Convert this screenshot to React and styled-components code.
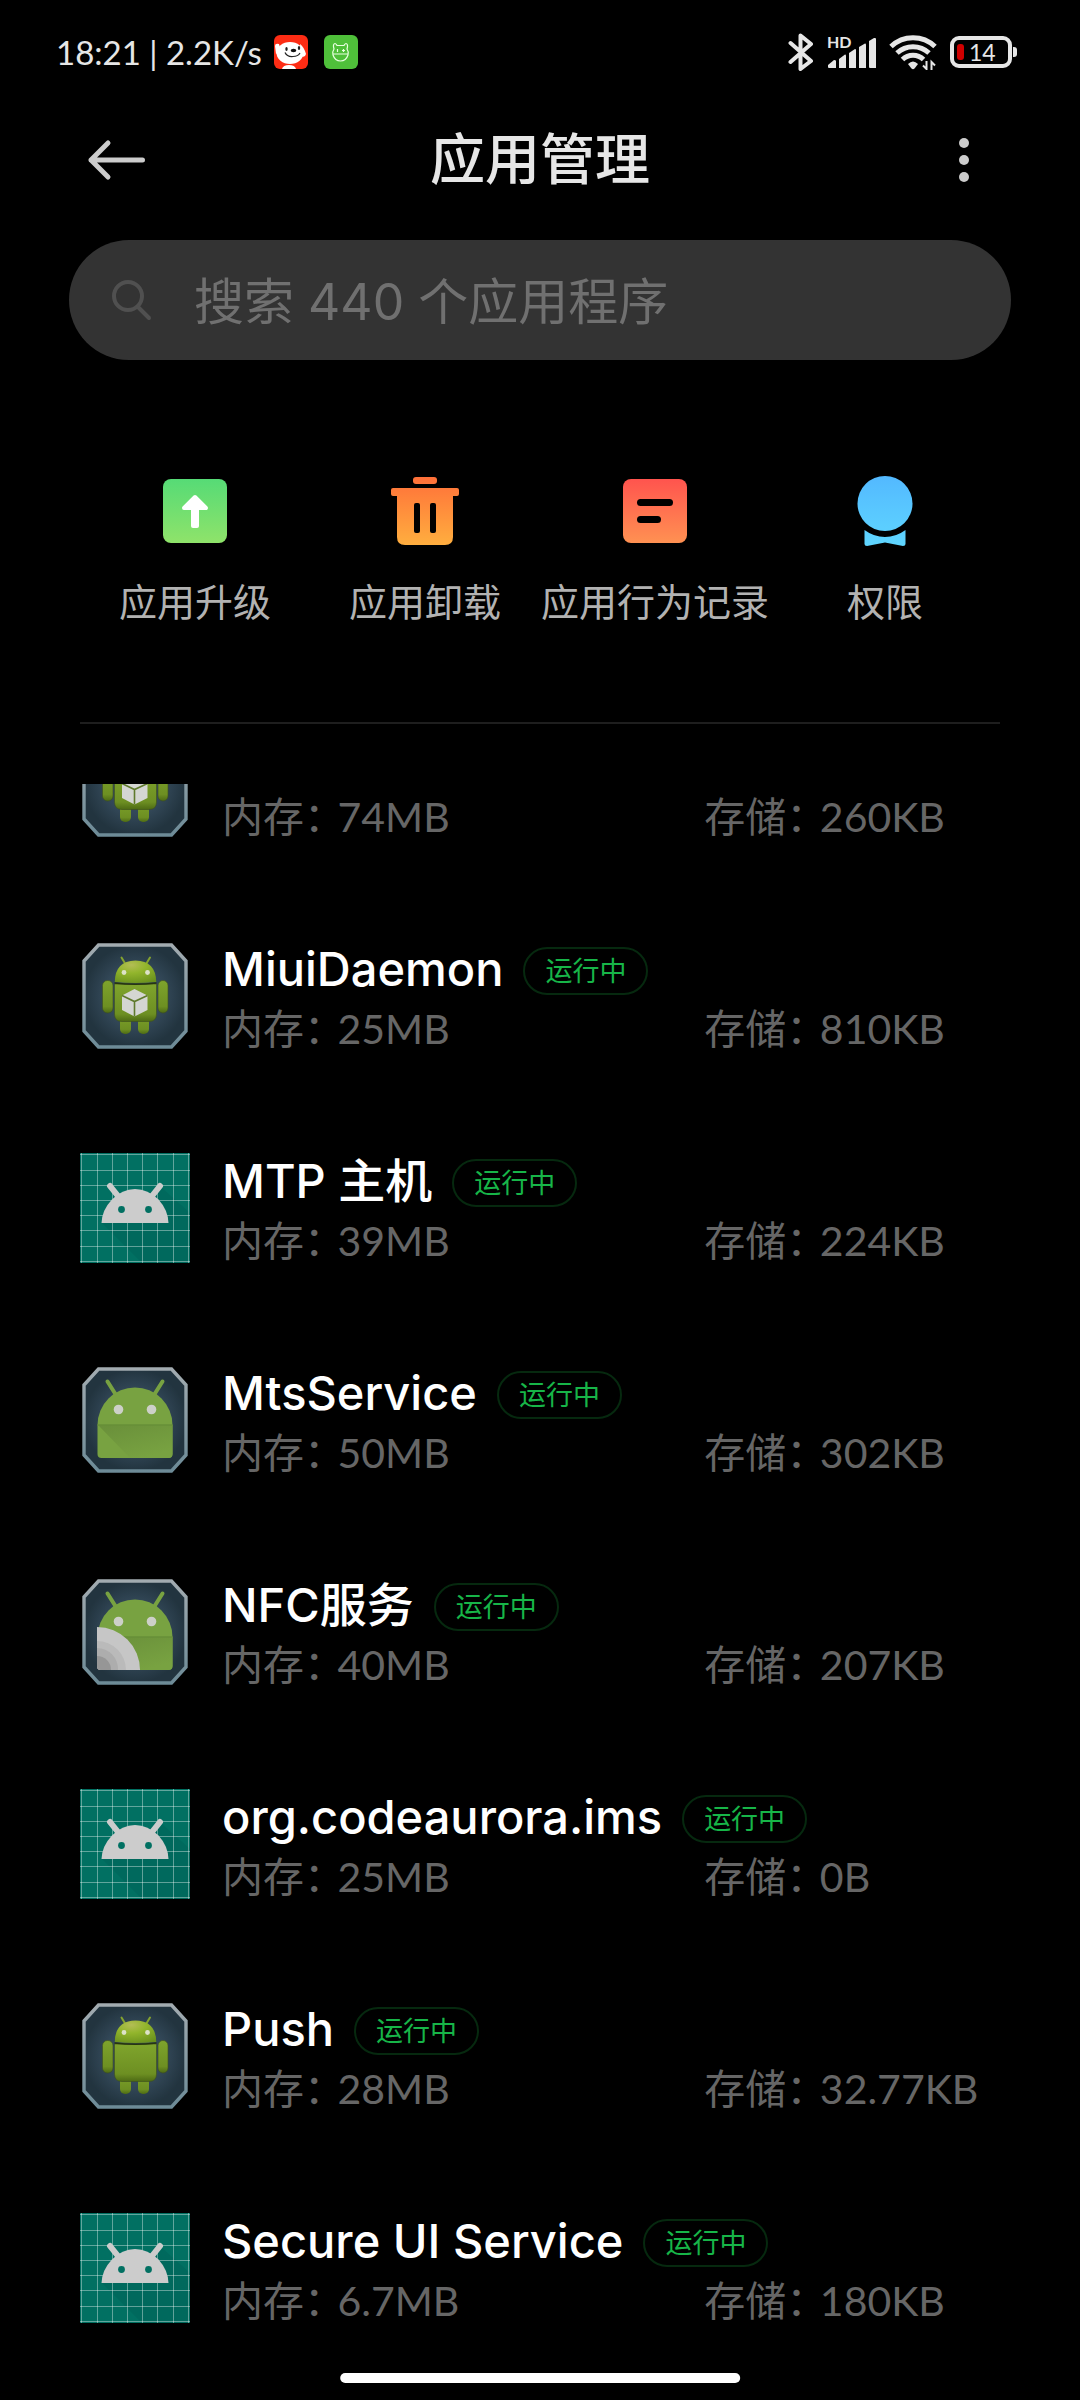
import { useState } from "react";
import styled, { createGlobalStyle } from "styled-components";

const actions = [
  { id: "upgrade", label: "应用升级" },
  { id: "uninstall", label: "应用卸载" },
  { id: "behavior", label: "应用行为记录" },
  { id: "permission", label: "权限" },
];

const apps = [
  { id: 1, icon: "robotBox", name: "", memory: "74MB", storage: "260KB" },
  { id: 2, icon: "robotBox", name: "MiuiDaemon", memory: "25MB", storage: "810KB" },
  { id: 3, icon: "grid", name: "MTP 主机", memory: "39MB", storage: "224KB" },
  { id: 4, icon: "head", name: "MtsService", memory: "50MB", storage: "302KB" },
  { id: 5, icon: "nfc", name: "NFC服务", memory: "40MB", storage: "207KB" },
  { id: 6, icon: "grid", name: "org.codeaurora.ims", memory: "25MB", storage: "0B" },
  { id: 7, icon: "robot", name: "Push", memory: "28MB", storage: "32.77KB" },
  { id: 8, icon: "grid", name: "Secure UI Service", memory: "6.7MB", storage: "180KB" },
];

const App = () => {
  const [keyword, setKeyword] = useState("");

  return (
    <>
      <GlobalStyle />
      <IconDefs />
      <Screen>
        <StatusBar />
        <Header>
          <IconButton type="button" aria-label="返回">
            <BackIcon />
          </IconButton>
          <Title>应用管理</Title>
          <IconButton type="button" aria-label="更多" $end>
            <MoreIcon />
          </IconButton>
        </Header>
        <SearchBox>
          <SearchIcon />
          <SearchInput
            type="text"
            aria-label="搜索应用程序"
            placeholder="搜索 440 个应用程序"
            value={keyword}
            onChange={(e) => setKeyword(e.target.value)}
          />
        </SearchBox>
        <Actions>
          {actions.map((action) => (
            <ActionButton key={action.id} type="button">
              <ActionIcon id={action.id} />
              {action.label}
            </ActionButton>
          ))}
        </Actions>
        <ListViewport>
          <AppList>
            {apps.map((app) => (
              <AppItem key={app.id} app={app} />
            ))}
          </AppList>
        </ListViewport>
        <HomeIndicator />
      </Screen>
    </>
  );
};

export default App;

const AppItem = ({ app }) => (
  <AppRow>
    <AppIcon type={app.icon} />
    <AppInfo>
      <NameLine>
        <AppName>{app.name}</AppName>
        {app.name && <Badge>运行中</Badge>}
      </NameLine>
      <Usage>
        <UsageItem>
          <UsageLabel>内存：</UsageLabel>
          {app.memory}
        </UsageItem>
        <UsageItem>
          <UsageLabel>存储：</UsageLabel>
          {app.storage}
        </UsageItem>
      </Usage>
    </AppInfo>
  </AppRow>
);

const StatusBar = () => (
  <StatusRow>
    <StatusGroup $gap={16}>
      <StatusGroup $gap={12}>
        <StatusText>18:21 | 2.2K/s</StatusText>
        <DogIcon />
      </StatusGroup>
      <HippoIcon />
    </StatusGroup>
    <StatusGroup $gap={12}>
      <BluetoothIcon />
      <SignalIcon />
      <WifiIcon />
      <BatteryWrapper>
        <Battery>
          <BatteryLevel />
          14
        </Battery>
        <BatteryNub />
      </BatteryWrapper>
    </StatusGroup>
  </StatusRow>
);

const DogIcon = () => (
  <svg width="34" height="34" viewBox="0 0 34 34">
    <rect width="34" height="34" rx="6" fill="#fd2c14" />
    <path d="M8 34 Q9 30 15 30 Q21 30 22 34 Z" fill="#fff" />
    <path d="M1 11 Q1 8 5 9 L7 16 L2 19 Z" fill="#fff" />
    <path d="M26 9 Q30 12 32 19 Q31 23 27 21 Z" fill="#fff" />
    <ellipse cx="16" cy="18" rx="13.5" ry="11" fill="#fff" />
    <ellipse cx="12.5" cy="14" rx="1.2" ry="2" fill="#222" />
    <ellipse cx="25" cy="13" rx="1.2" ry="2" fill="#222" />
    <ellipse cx="19.5" cy="15.5" rx="2.8" ry="1.8" fill="#111" />
    <path d="M11 17.5 Q13 22 19 21.5 Q24 21.5 26 18" fill="none" stroke="#222" strokeWidth="1.2" />
  </svg>
);

const HippoIcon = () => (
  <svg width="34" height="34" viewBox="0 0 34 34">
    <rect width="34" height="34" rx="6" fill="#4fc03a" />
    <path
      d="M10 14 Q8.5 9 11 8.5 Q12.5 9 13 10.5 H20 Q20.5 9 22 8.5 Q24.5 9 23 14 Q25 17 24 20 Q22 26 16.5 26 Q11 26 9 20 Q8 17 10 14 Z M9 19 H24"
      fill="none"
      stroke="#e9ffe0"
      strokeWidth="1.2"
    />
    <path d="M13.5 14 V17 M19.5 14 V17 M18 15.5 H21" stroke="#e9ffe0" strokeWidth="1.2" />
  </svg>
);

const BluetoothIcon = () => (
  <svg width="26" height="40" viewBox="0 0 26 40" fill="none" stroke="#e6e6e6" strokeWidth="4" strokeLinejoin="round" strokeLinecap="round">
    <path d="M2.5 11 L23 29 L12.5 37 V3.5 L23 12 L2.5 30" />
  </svg>
);

const SignalIcon = () => (
  <svg width="50" height="52" viewBox="0 -8 50 52" fill="#e6e6e6">
    <text x="1" y="14" fontSize="16" fontWeight="700">
      HD
    </text>
    <path d="M2 31 L8 26 Q10 26 10 27 V34 H3 Q2 34 2 33 Z" />
    <path d="M13 25 L19 20.5 Q20 20.5 20 21.5 V34 H13 Z" />
    <path d="M23 19 L29 15 Q30 15 30 16 V34 H23 Z" />
    <path d="M33 13 L39 9.5 Q40 9.5 40 10.5 V34 H33 Z" />
    <path d="M43 7 L48 4 Q50 3.5 50 5 V34 H44 Q43 34 43 33 Z" />
  </svg>
);

const WifiIcon = () => (
  <svg width="50" height="36" viewBox="0 0 50 36" fill="none" stroke="#e6e6e6" strokeWidth="5">
    <path d="M3 12.5 A32 32 0 0 1 47 12.5" />
    <path d="M9 19 A23.5 23.5 0 0 1 41 19" />
    <path d="M14.5 25.5 A15 15 0 0 1 35.5 25.5" />
    <path d="M20 30 Q25 25 30 30 L26.5 34.5 Q25 36 23.5 34.5 Z" fill="#e6e6e6" stroke="none" />
    <path d="M38.5 26.5 V36 M43.5 36 V26.5" stroke="#000" strokeWidth="6" />
    <path d="M38.5 27 V35 L35 31.5 M43.5 36 V28 L47 31.5" strokeWidth="2" />
  </svg>
);

const BackIcon = () => (
  <svg width="72" height="48" viewBox="0 0 72 48" fill="none" stroke="#ccc" strokeWidth="5" strokeLinecap="round" strokeLinejoin="round">
    <path d="M62.5 24 H11 M28 7 L11 24 L28 41" />
  </svg>
);

const MoreIcon = () => (
  <svg width="72" height="48" viewBox="0 0 72 48" fill="#ccc">
    <circle cx="36" cy="7" r="5" />
    <circle cx="36" cy="24" r="5" />
    <circle cx="36" cy="41" r="5" />
  </svg>
);

const SearchIcon = () => (
  <svg width="42" height="42" viewBox="0 0 42 42" fill="none" stroke="#505050" strokeWidth="4" strokeLinecap="round">
    <circle cx="17" cy="17" r="14" />
    <path d="M27 28 L38 39" />
  </svg>
);

// gradients shared by the icons below
const IconDefs = () => (
  <HiddenSvg aria-hidden="true">
    <defs>
      <linearGradient id="green" x1="0" y1="0" x2="0" y2="1">
        <stop offset="0" stopColor="#56db76" />
        <stop offset="1" stopColor="#8fe36a" />
      </linearGradient>
      <linearGradient id="orange" gradientUnits="userSpaceOnUse" x1="0" y1="0" x2="0" y2="70">
        <stop offset="0" stopColor="#ff6f39" />
        <stop offset="1" stopColor="#ffaf3f" />
      </linearGradient>
      <linearGradient id="red" x1="0" y1="0" x2="0" y2="1">
        <stop offset="0" stopColor="#ff544e" />
        <stop offset="1" stopColor="#ff9152" />
      </linearGradient>
      <linearGradient id="blue" gradientUnits="userSpaceOnUse" x1="0" y1="0" x2="0" y2="70">
        <stop offset="0" stopColor="#53b9ff" />
        <stop offset="1" stopColor="#5fd6ff" />
      </linearGradient>
      <radialGradient id="frame">
        <stop offset="0" stopColor="#40576a" />
        <stop offset="0.6" stopColor="#324757" />
        <stop offset="1" stopColor="#22343f" />
      </radialGradient>
      <linearGradient id="frameEdge" x1="0" y1="0" x2="0" y2="1">
        <stop offset="0" stopColor="#a2abb0" />
        <stop offset="1" stopColor="#6d8b97" />
      </linearGradient>
      <linearGradient id="headShadow" x1="0" y1="0" x2="0.6" y2="1">
        <stop offset="0" stopColor="#698f3a" />
        <stop offset="1" stopColor="#78a241" />
      </linearGradient>
      <radialGradient id="robotHead" cx="0.4" cy="0.2" r="0.9">
        <stop offset="0" stopColor="#b3bd55" />
        <stop offset="0.4" stopColor="#92b52c" />
        <stop offset="1" stopColor="#688f1c" />
      </radialGradient>
      <linearGradient id="robotBody" x1="0" y1="0" x2="0" y2="1">
        <stop offset="0" stopColor="#7fa42c" />
        <stop offset="0.8" stopColor="#6d8f22" />
        <stop offset="1" stopColor="#4d6a14" />
      </linearGradient>
    </defs>
  </HiddenSvg>
);

const ActionIcon = ({ id }) => (
  <svg width="70" height="70" viewBox="0 0 70 70">
    {id === "upgrade" && (
      <>
        <rect x="3" y="3" width="64" height="64" rx="8" fill="url(#green)" />
        <path d="M35 21 L46 32 H24 Z" fill="#fff" stroke="#fff" strokeWidth="4" strokeLinejoin="round" />
        <rect x="31" y="28" width="8" height="24" rx="2" fill="#fff" />
      </>
    )}
    {id === "uninstall" && (
      <>
        <rect x="23" y="1" width="24" height="7" rx="3" fill="url(#orange)" />
        <path
          d="M3 12 H67 Q69 12 69 14 V18 Q69 20 67 20 H63 V61 Q63 69 55 69 H15 Q7 69 7 61 V20 H3 Q1 20 1 18 V14 Q1 12 3 12 Z"
          fill="url(#orange)"
        />
        <rect x="24" y="27" width="6" height="30" rx="2" />
        <rect x="40" y="27" width="6" height="30" rx="2" />
      </>
    )}
    {id === "behavior" && (
      <>
        <rect x="3" y="3" width="64" height="64" rx="8" fill="url(#red)" />
        <rect x="17" y="23" width="36" height="7" rx="3.5" />
        <rect x="17" y="40" width="24" height="7" rx="3.5" />
      </>
    )}
    {id === "permission" && (
      <>
        <circle cx="35" cy="27.5" r="27.5" fill="url(#blue)" />
        <path d="M14.5 54 Q24 61 35 61 Q46 61 55.5 54 V68 Q55.5 70 53 70 L35 66.5 L17 70 Q14.5 70 14.5 68 Z" fill="url(#blue)" />
      </>
    )}
  </svg>
);

const AppIcon = ({ type }) => (
  <svg width="110" height="110" viewBox="0 0 110 110">
    {type === "grid" ? (
      <GridRobot />
    ) : (
      <path
        d="M18.5 4 H91.5 L106 20 V90 L91.5 106 H18.5 L4 90 V20 Z"
        fill="url(#frame)"
        stroke="url(#frameEdge)"
        strokeWidth="3.4"
      />
    )}
    {type === "robot" && <Robot />}
    {type === "robotBox" && (
      <>
        <Robot />
        <path d="M54.5 48 L67.5 54.5 V69 L54.5 75.5 L42 69 V54.5 Z" fill="#d4d6d2" />
        <path d="M42 54.5 L54.5 60.5 L67.5 54.5 M54.5 60.5 V75.5" fill="none" stroke="#5f7a2c" strokeWidth="1.6" />
      </>
    )}
    {type === "head" && <Head />}
    {type === "nfc" && (
      <>
        <Head />
        <path d="M17 50 A43 43 0 0 1 60 93 H21 Q17 93 17 89 Z" fill="#c6c6c6" />
        <path d="M17 64 A29 29 0 0 1 46 93 H21 Q17 93 17 89 Z" fill="#bababa" />
        <path d="M17 71 A21 21 0 0 1 38 93 H21 Q17 93 17 89 Z" fill="#adadad" />
        <path d="M17 79 A14 14 0 0 1 31 93 H21 Q17 93 17 89 Z" fill="#969696" />
      </>
    )}
  </svg>
);

const Head = () => (
  <>
    <path d="M27.5 16.5 L36 30 M82.5 16.5 L74 30" stroke="#78a241" strokeWidth="4" strokeLinecap="round" />
    <path d="M17.5 60 A37.5 37.5 0 0 1 92.5 60 V89 Q92.5 93 88.5 93 H21.5 Q17.5 93 17.5 89 Z" fill="#78a241" />
    <path d="M18 60 L50 93 H88 Q92.5 93 92.5 89 V60 Z" fill="url(#headShadow)" />
    <path d="M17.5 60 H92.5" stroke="#678f38" strokeWidth="1.5" />
    <circle cx="38.5" cy="44.5" r="4.8" fill="#cdd0c8" />
    <circle cx="71.5" cy="44.5" r="4.8" fill="#cdd0c8" />
  </>
);

const Robot = () => (
  <>
    <path d="M41.5 16.5 L46 24 M70 16.5 L65.5 24" stroke="#84a32f" strokeWidth="2" strokeLinecap="round" />
    <rect x="22.5" y="39.5" width="10.5" height="32.5" rx="5" fill="url(#robotBody)" stroke="#3d4f1d" strokeWidth="0.6" />
    <rect x="78" y="39.5" width="10" height="32.5" rx="5" fill="url(#robotBody)" stroke="#3d4f1d" strokeWidth="0.6" />
    <rect x="40" y="70" width="11" height="23" rx="5" fill="url(#robotBody)" />
    <rect x="58" y="70" width="11" height="23" rx="5" fill="url(#robotBody)" />
    <path d="M34.5 43 H76.5 V73 Q76.5 80.5 69 80.5 H42 Q34.5 80.5 34.5 73 Z" fill="url(#robotBody)" stroke="#3d4f1d" strokeWidth="0.6" />
    <path d="M34.8 41 Q35 20 55.5 19.5 Q76 20 76.2 41 Q55 43 34.8 41 Z" fill="url(#robotHead)" />
    <path d="M34.5 42 Q55 44.5 76.5 42" fill="none" stroke="#263411" strokeWidth="1.6" />
    <circle cx="44" cy="31.5" r="2.4" fill="#dde2c8" />
    <circle cx="67.5" cy="31.5" r="2.4" fill="#dde2c8" />
  </>
);

const gridLines = [1, 17, 32, 47, 62, 77, 93, 108];

const GridRobot = () => (
  <>
    <rect width="110" height="110" fill="#017062" />
    <path d="M22 70 L62 110 H110 V60 L82 35 Z" fill="#00695d" />
    {gridLines.map((pos) => (
      <path key={pos} d={`M${pos + 0.5} 0 V110 M0 ${pos + 0.5} H110`} stroke="#fff" strokeOpacity="0.38" />
    ))}
    <path d="M30 33 L38 43 M80 33 L72 43" stroke="#ccc" strokeWidth="6" strokeLinecap="round" />
    <path d="M21.5 70 Q22 57 32 46.5 Q42 36 55 36 Q68 36 78.5 46.5 Q88 57 88.5 70 Z" fill="#ccc" />
    <circle cx="41.5" cy="56.5" r="3.4" fill="#017062" />
    <circle cx="68.5" cy="56.5" r="3.4" fill="#017062" />
  </>
);

const GlobalStyle = createGlobalStyle`
  * {
    box-sizing: border-box;
  }

  body {
    margin: 0;
    background: #000;
    font-family: Lato, "Noto Sans CJK SC", sans-serif;
  }

  svg {
    display: block;
    flex-shrink: 0;
  }

  button {
    padding: 0;
    border: none;
    background: none;
    font-family: inherit;
    cursor: pointer;
  }
`;

const HiddenSvg = styled.svg`
  position: absolute;
  width: 0;
  height: 0;
`;

const Screen = styled.main`
  display: flex;
  flex-direction: column;
  min-height: 100vh;
  color: #e6e6e6;
`;

const StatusRow = styled.div`
  display: flex;
  align-items: center;
  justify-content: space-between;
  height: 104px;
  padding: 0 63px 0 56px;
`;

const StatusGroup = styled.div`
  display: flex;
  align-items: center;
  gap: ${({ $gap }) => $gap}px;
`;

const StatusText = styled.span`
  font-size: 33px;
  line-height: 40px;
  white-space: nowrap;
`;

const BatteryWrapper = styled.div`
  display: flex;
  align-items: center;
  gap: 1px;
`;

const Battery = styled.div`
  display: flex;
  align-items: center;
  gap: 5px;
  width: 62px;
  height: 32px;
  padding-left: 3px;
  border: 4px solid #e6e6e6;
  border-radius: 9px;
  font-size: 23px;
  line-height: 24px;
`;

const BatteryLevel = styled.span`
  width: 7px;
  height: 16px;
  border-radius: 3px;
  background: #d00000;
`;

const BatteryNub = styled.span`
  width: 4px;
  height: 10px;
  border-radius: 0 3px 3px 0;
  background: #e6e6e6;
`;

const Header = styled.header`
  display: grid;
  grid-template-columns: 1fr auto 1fr;
  align-items: center;
  height: 112px;
  padding: 0 80px;
`;

const IconButton = styled.button`
  justify-self: ${({ $end }) => ($end ? "end" : "start")};
`;

const Title = styled.h1`
  margin: 0;
  padding-bottom: 4px;
  font-size: 55px;
  font-weight: 500;
  line-height: 72px;
`;

const SearchBox = styled.div`
  display: flex;
  align-items: center;
  gap: 41px;
  height: 120px;
  margin: 24px 69px 0;
  padding: 0 42px;
  border-radius: 60px;
  background: #333;
`;

const SearchInput = styled.input`
  flex: 1;
  min-width: 0;
  padding: 4px 0 0;
  border: none;
  outline: none;
  background: none;
  color: #e6e6e6;
  font-family: Inter, "Noto Sans CJK SC", sans-serif;
  font-size: 50px;
  line-height: 72px;

  &::placeholder {
    color: #707070;
    opacity: 1;
  }
`;

const Actions = styled.div`
  display: grid;
  grid-template-columns: repeat(4, 1fr);
  margin: 0 80px;
  padding: 116px 0 98px;
  border-bottom: 2px solid #1e1e1e;
`;

const ActionButton = styled.button`
  display: flex;
  flex-direction: column;
  align-items: center;
  gap: 32px;
  color: #b2b2b2;
  font-size: 38px;
  line-height: 46px;
  white-space: nowrap;
`;

const ListViewport = styled.div`
  flex: 1;
  margin-top: 60px;
  overflow: hidden;
`;

// the list is scrolled by half a row
const AppList = styled.ul`
  margin: -106px 0 0;
  padding: 0 80px;
  list-style: none;
`;

const AppRow = styled.li`
  display: flex;
  align-items: center;
  gap: 32px;
  height: 212px;
`;

const AppInfo = styled.div`
  flex: 1;
  min-width: 0;
  padding-top: 5px;
`;

const NameLine = styled.div`
  display: flex;
  align-items: center;
  gap: 20px;
  height: 60px;
`;

const AppName = styled.h2`
  margin: 0;
  color: #fff;
  font-family: Inter, "Noto Sans CJK SC", sans-serif;
  font-size: 47px;
  font-weight: 500;
  line-height: 60px;
  white-space: nowrap;
`;

const Badge = styled.span`
  margin-top: 4px;
  padding: 0 20px;
  border: 2px solid #06290f;
  border-radius: 24px;
  color: #17b548;
  font-size: 27px;
  line-height: 44px;
  white-space: nowrap;
`;

const Usage = styled.div`
  display: grid;
  grid-template-columns: 62% 38%;
  color: #666;
  font-size: 41px;
  line-height: 60px;
`;

const UsageItem = styled.span`
  display: flex;
  gap: 13px;
  white-space: nowrap;
`;

const UsageLabel = styled.span`
  font-feature-settings: "halt" 1;
`;

const HomeIndicator = styled.div`
  position: fixed;
  bottom: 17px;
  left: 50%;
  width: 37%;
  height: 10px;
  border-radius: 5px;
  background: #fff;
  transform: translateX(-50%);
`;
